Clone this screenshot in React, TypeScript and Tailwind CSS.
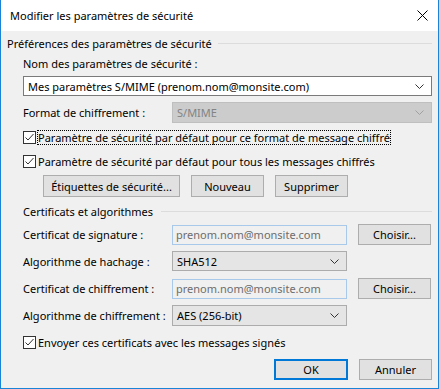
import React from 'react';

const font = { fontFamily: '"Noto Sans", "Open Sans", sans-serif' };

function Chevron({ color = '#333' }: { color?: string }) {
    return (
        <svg width="9" height="5" viewBox="0 0 9 5" className="shrink-0">
            <path d="M0.5 0.5 L4.5 4.5 L8.5 0.5" fill="none" stroke={color} strokeWidth="1" />
        </svg>
    );
}

function CheckBox() {
    return (
        <span className="w-[13px] h-[13px] border border-[#333333] bg-white flex items-center justify-center shrink-0">
            <svg width="11" height="11" viewBox="0 0 11 11">
                <path d="M1.5 5.5 L4 8 L9.5 2" fill="none" stroke="#333" strokeWidth="1" />
            </svg>
        </span>
    );
}

function Button({ label, w, primary }: { label: string; w: string; primary?: boolean }) {
    return (
        <div
            className={
                'h-full flex items-center justify-center bg-[#e1e1e1] ' +
                w +
                (primary ? ' border-2 border-[#0078d7]' : ' border border-[#adadad]')
            }
        >
            {label}
        </div>
    );
}

function Combo({ value, w }: { value: string; w: string }) {
    return (
        <div className={'h-full flex items-center justify-between bg-[#e5e5e5] border border-[#acacac] pl-[4px] pr-[7px] ' + w}>
            <span>{value}</span>
            <Chevron />
        </div>
    );
}

function ReadOnly({ value }: { value: string }) {
    return (
        <div className="h-[20px] w-[175px] flex items-center bg-[#f0f0f0] border border-[#a9c9ea] pl-[3px] text-[#6d6d6d]">
            {value}
        </div>
    );
}

export default function App() {
    return (
        <div className="w-[439px] h-[389px] flex flex-col bg-[#f0f0f0] border-l border-r border-b border-[#1883d7] text-[11px] text-black leading-none whitespace-nowrap" style={font}>
            <div className="h-[31px] bg-white flex items-center justify-between pl-[9px] pr-[10px] shrink-0">
                <span className="text-[11px]">Modifier les paramètres de sécurité</span>
                <svg width="11" height="11" viewBox="0 0 11 11">
                    <path d="M0.5 0.5 L10.5 10.5 M10.5 0.5 L0.5 10.5" stroke="#000" strokeWidth="1" />
                </svg>
            </div>

            <div className="flex flex-col pl-[6px] pr-[6px]">
                <div className="mt-[6px] h-[12px] flex items-center">
                    <span>Préférences des paramètres de sécurité</span>
                    <div className="flex-1 h-px bg-[#dcdcdc] ml-[6px]" />
                </div>

                <div className="flex flex-col ml-[16px]">
                    <div className="mt-[7px] h-[15px] flex items-center">Nom des paramètres de sécurité :</div>

                    <div className="mt-[5px] h-[20px] flex items-center justify-between bg-white border border-[#7a7a7a] pl-[4px] pr-[7px]">
                        <span>Mes paramètres S/MIME (prenom.nom@monsite.com)</span>
                        <Chevron />
                    </div>

                    <div className="mt-[6px] h-[21px] flex items-center">
                        <span className="w-[149px]">Format de chiffrement :</span>
                        <div className="flex-1 h-full flex items-center justify-between bg-[#cccccc] border border-[#bfbfbf] pl-[4px] pr-[7px] text-[#838383]">
                            <span>S/MIME</span>
                            <Chevron color="#a0a0a0" />
                        </div>
                    </div>

                    <div className="mt-[7px] h-[15px] flex items-center">
                        <CheckBox />
                        <span className="ml-[1px] h-[15px] flex items-center px-[1px] outline outline-1 outline-dotted outline-black -outline-offset-1">
                            Paramètre de sécurité par défaut pour ce format de message chiffré
                        </span>
                    </div>

                    <div className="mt-[9px] h-[15px] flex items-center">
                        <CheckBox />
                        <span className="ml-[2px]">Paramètre de sécurité par défaut pour tous les messages chiffrés</span>
                    </div>

                    <div className="mt-[6px] h-[22px] flex items-center gap-[11px] ml-[20px]">
                        <Button label="Étiquettes de sécurité..." w="w-[137px]" />
                        <Button label="Nouveau" w="w-[73px]" />
                        <Button label="Supprimer" w="w-[73px]" />
                    </div>

                    <div className="mt-[8px] h-[12px] flex items-center">
                        <span>Certificats et algorithmes</span>
                        <div className="flex-1 h-px bg-[#dcdcdc] ml-[8px]" />
                    </div>

                    <div className="mt-[7px] h-[21px] flex items-center">
                        <span className="w-[149px]">Certificat de signature :</span>
                        <ReadOnly value="prenom.nom@monsite.com" />
                        <div className="ml-[11px] h-full">
                            <Button label="Choisir..." w="w-[73px]" />
                        </div>
                    </div>

                    <div className="mt-[6px] h-[20px] flex items-center">
                        <span className="w-[149px]">Algorithme de hachage :</span>
                        <Combo value="SHA512" w="w-[175px]" />
                    </div>

                    <div className="mt-[7px] h-[21px] flex items-center">
                        <span className="w-[149px]">Certificat de chiffrement :</span>
                        <ReadOnly value="prenom.nom@monsite.com" />
                        <div className="ml-[11px] h-full">
                            <Button label="Choisir..." w="w-[73px]" />
                        </div>
                    </div>

                    <div className="mt-[6px] h-[21px] flex items-center">
                        <span className="w-[149px]">Algorithme de chiffrement :</span>
                        <Combo value="AES (256-bit)" w="w-[175px]" />
                    </div>

                    <div className="mt-[9px] h-[15px] flex items-center">
                        <CheckBox />
                        <span className="ml-[2px]">Envoyer ces certificats avec les messages signés</span>
                    </div>

                    <div className="mt-[9px] h-[21px] flex items-center justify-end gap-[11px]">
                        <Button label="OK" w="w-[74px]" primary />
                        <Button label="Annuler" w="w-[73px]" />
                    </div>
                </div>
            </div>
        </div>
    );
}
